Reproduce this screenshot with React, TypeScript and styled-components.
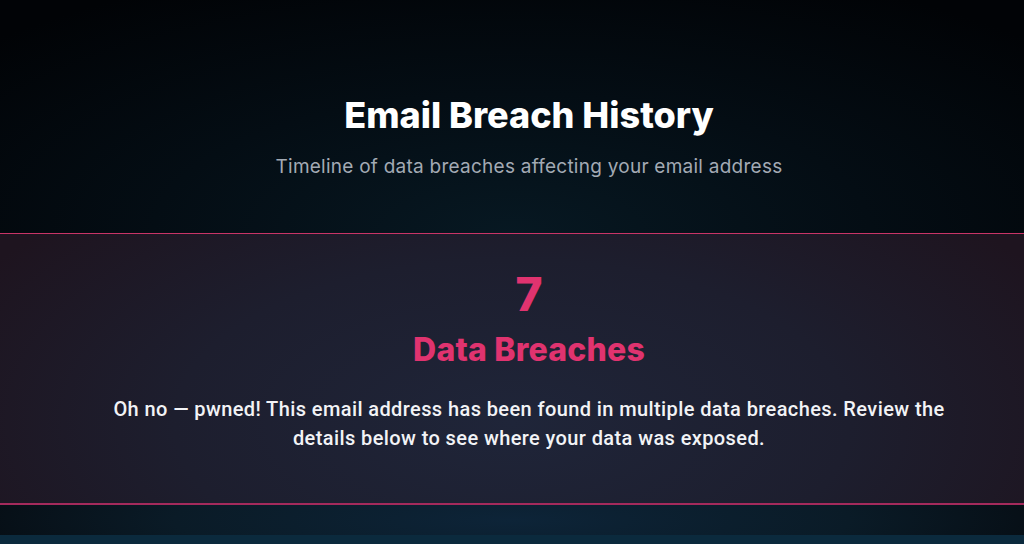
import React from "react";
import styled, { createGlobalStyle } from "styled-components";

const GlobalStyle = createGlobalStyle`
  * { box-sizing: border-box; }
  html, body {
    margin: 0;
    padding: 0;
    background: #000306;
    font-family: Inter, "Noto Sans", sans-serif;
  }
`;

const App = () => {
  return (
    <Page>
      <GlobalStyle />
      <Header>
        <Title>Email Breach History</Title>
        <Subtitle>Timeline of data breaches affecting your email address</Subtitle>
      </Header>
      <Summary>
        <Count>7</Count>
        <CountLabel>Data Breaches</CountLabel>
        <Message>
          Oh no — pwned! This email address has been found in multiple data
          breaches. Review the details below to see where your data was exposed.
        </Message>
      </Summary>
      <Timeline>
        <TimelineTop />
        <TimelineBody />
      </Timeline>
    </Page>
  );
};

export default App;

const Page = styled.div`
  min-height: 544px;
  display: flex;
  flex-direction: column;
  background: #000306;
`;

const Header = styled.header`
  height: 234px;
  display: flex;
  flex-direction: column;
  align-items: center;
  padding: 92px 0 0 34px;
  background: radial-gradient(
    ellipse 70% 120% at 50% 100%,
    #071822 0%,
    #040d14 50%,
    #010306 100%
  );
  border-bottom: 1px solid #c93467;
`;

const Title = styled.h1`
  margin: 0;
  font-size: 36px;
  font-weight: 800;
  letter-spacing: 0;
  line-height: 46px;
  color: #ffffff;
`;

const Subtitle = styled.p`
  margin: 15px 0 0;
  font-size: 19px;
  font-weight: 400;
  letter-spacing: 0.25px;
  line-height: 28px;
  color: #a3aab4;
`;

const Summary = styled.section`
  height: 271px;
  display: flex;
  flex-direction: column;
  align-items: center;
  padding: 34px 0 0 34px;
  background: radial-gradient(
    ellipse 60% 110% at 50% 70%,
    #1f2539 0%,
    #1d1e2e 55%,
    #1e141f 100%
  );
  border-bottom: 2px solid #a42a5c;
`;

const Count = styled.div`
  font-size: 46px;
  font-weight: 800;
  line-height: 52px;
  color: #e0336f;
`;

const CountLabel = styled.h2`
  margin: 10px 0 0;
  font-size: 32px;
  font-weight: 800;
  letter-spacing: 0.2px;
  line-height: 40px;
  color: #e0336f;
`;

const Message = styled.p`
  margin: 25px 0 0;
  max-width: 850px;
  text-align: center;
  font-family: Roboto, "Noto Sans", sans-serif;
  font-size: 20px;
  font-weight: 500;
  letter-spacing: 0.4px;
  line-height: 29px;
  color: #f2f3f6;
`;

const Timeline = styled.div`
  flex: 1;
  display: flex;
  flex-direction: column;
`;

const TimelineTop = styled.div`
  height: 30px;
  background: radial-gradient(
    ellipse 60% 300% at 50% 50%,
    #0d2438 0%,
    #0a1b27 55%,
    #05090e 100%
  );
`;

const TimelineBody = styled.div`
  flex: 1;
  background: #0b2a3d;
`;
